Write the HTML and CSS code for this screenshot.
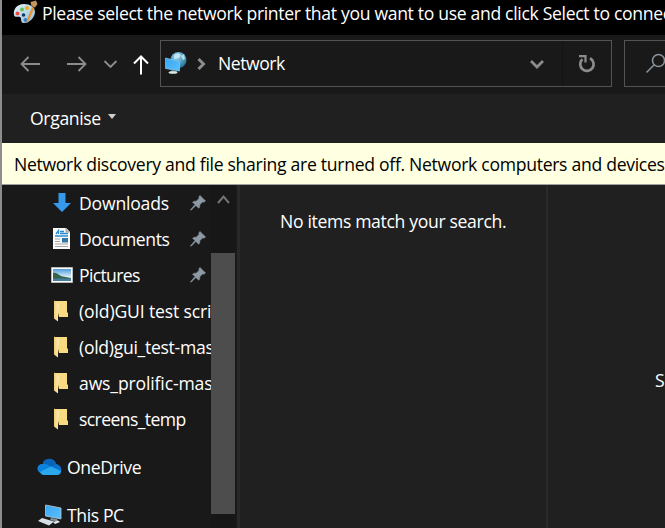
FILE: index.html
```html
<!DOCTYPE html>
<html lang="en-GB">
<head>
<meta charset="utf-8">
<title>Select network printer</title>
<link rel="stylesheet" href="styles.css">
</head>
<body>
<svg class="defs" width="0" height="0" aria-hidden="true">
  <defs>
    <linearGradient id="fold" x1="0" x2="1" y1="0" y2="0"><stop offset="0" stop-color="#f3cf76"/><stop offset="1" stop-color="#fdebb4"/></linearGradient>
    <linearGradient id="screen" x1="0" x2="1" y1="0" y2="1"><stop offset="0" stop-color="#3aa5f2"/><stop offset="1" stop-color="#59c1ff"/></linearGradient>
    <linearGradient id="sky" x1="0" x2="0" y1="0" y2="1"><stop offset="0" stop-color="#4f9bdc"/><stop offset=".7" stop-color="#e4f5fa"/></linearGradient>
    <radialGradient id="globe" cx=".4" cy=".3" r=".7"><stop offset="0" stop-color="#9bd4ea"/><stop offset="1" stop-color="#25779f"/></radialGradient>
    <linearGradient id="wood" x1="0" x2="1" y1="0" y2="1"><stop offset="0" stop-color="#e8f4fb"/><stop offset="1" stop-color="#86bbdc"/></linearGradient>
    <symbol id="pin" viewBox="0 0 16 16"><path d="M10 0.500L15.500 6L14 7.200L12.800 6.800L9.700 9.800C10 11.200 9.700 12.200 8.800 13.200L5.800 10.400L1.400 15L0.600 15.200L0.800 14.400L5 9.600L2.600 7.200C3.600 6.200 5 6 6.200 6.300L9.200 3.200L8.800 2Z" fill="#8d99a5" stroke="#8d99a5" stroke-width=".6"/></symbol>
    <symbol id="folder" viewBox="0 0 15 22"><path d="M1 1H13V12L14 13V17H5Z" fill="#f8da80"/><path d="M0 .5L5 3V9L4 11V21.500L0 18.500Z" fill="url(#fold)"/></symbol>
  </defs>
</svg>
<main class="window">
  <header class="titlebar">
    <svg class="paint" width="26" height="25" viewBox="0 0 26 25">
      <path d="M11 4C4 4 0 9 1 15C2 18 5 16 7 17C9 18 7 22 10 23C15 24 22 18 22 12C22 7 17 4 11 4Z" fill="url(#wood)"/>
      <circle cx="9" cy="9.500" r="2" fill="#6bc04b"/><circle cx="14" cy="8" r="2" fill="#e9ad26"/><circle cx="4.500" cy="13.500" r="2" fill="#e94b43"/><circle cx="10.500" cy="15" r="1.800" fill="#123b58"/><circle cx="12.500" cy="20" r="2" fill="#397fd0"/>
      <path d="M19 7L21.500 8L15 22L13.500 23L13.800 20Z" fill="#e69431"/><path d="M17.500 2L23 .5L24.500 4L22 7.500L18.500 6Z" fill="#c3935e"/>
    </svg>
    <span class="title">Please select the network printer that you want to use and click Select to connect</span>
  </header>
  <nav class="navbar">
    <svg class="navicons" width="158" height="59" viewBox="0 0 158 59" fill="none" stroke="#8c8c8c" stroke-width="1.800">
      <path d="M38 29H20M26.500 22L19.500 29L26.500 36M65 29H83M76.500 22L83.500 29L76.500 36M102.500 26L108.500 32L114.500 26"/>
      <path d="M139 39.500V22M132 28.500L139 21.500L146 28.500" stroke="#fff" stroke-width="2"/>
    </svg>
    <div class="address">
      <svg width="22" height="23" viewBox="0 0 22 23">
        <circle cx="13.500" cy="8" r="8" fill="url(#globe)"/><path d="M9 3L13 1L16 3L14 6L9 7ZM16 4L19 2L20 7L18 8Z" fill="#d3f1fa" opacity=".75"/>
        <path d="M.5 6L14.500 9.500V19L.500 16.500Z" fill="url(#screen)" stroke="#82cbed" stroke-width=".7"/><path d="M7 18L11 19L12 20H5Z" fill="#82939e"/><ellipse cx="8" cy="20.500" rx="4.500" ry="1.300" fill="#dbe6eb"/>
      </svg>
      <svg class="crumb" width="9" height="12" viewBox="0 0 9 12"><path d="M1.500 1L6.500 6L1.500 11" fill="none" stroke="#8c8c8c" stroke-width="3"/></svg>
      <span class="place">Network</span>
      <svg class="drop" width="14" height="10" viewBox="0 0 14 10"><path d="M1 2L7 8L13 2" fill="none" stroke="#8c8c8c" stroke-width="2.800"/></svg>
      <div class="reload"><svg width="18" height="18" viewBox="0 0 18 18"><path d="M12 3.200A6.700 6.700 0 1 1 4.400 4.200" fill="none" stroke="#8c8c8c" stroke-width="2.700"/><path d="M1 1.200H7.500V7.500" fill="none" stroke="#8c8c8c" stroke-width="2.200"/></svg></div>
    </div>
    <div class="search"><svg width="22" height="22" viewBox="0 0 22 22" fill="none" stroke="#8b949b" stroke-width="1.500"><circle cx="13.500" cy="7.500" r="6"/><path d="M9.200 11.800L1.500 19.500"/></svg></div>
  </nav>
  <div class="toolbar"><span class="organise">Organise</span><i class="caret"></i></div>
  <div class="notice"><span>Network discovery and file sharing are turned off. Network computers and devices</span></div>
  <section class="content">
    <aside class="tree">
      <div class="items">
        <div class="row"><svg class="icon" width="22" height="24" viewBox="0 0 22 24"><path d="M7.500 2H14.500V12H20L11 21L2 12H7.500Z" fill="#3698ea"/></svg><span class="downloads">Downloads</span><svg class="pin" width="16" height="16"><use href="#pin"/></svg></div>
        <div class="row"><svg class="icon" width="22" height="24" viewBox="0 0 22 24"><path d="M2 1H15L19 5V22H2Z" fill="#fafafa"/><path d="M15 1V5H19" fill="#ccc" stroke="#888" stroke-width=".7"/><path d="M5 7L7.500 3.500V7M9 4.500H13M9 6.500H17M4 9H17" fill="none" stroke="#288bd0" stroke-width="1.300"/><path d="M4 12H9M4 14.500H9M4 17H17M4 19.500H17" stroke="#a5a5a5"/><path d="M11 11H17V15.500H11Z" fill="#3277a5"/></svg><span class="documents">Documents</span><svg class="pin" width="16" height="16"><use href="#pin"/></svg></div>
        <div class="row"><svg class="icon" width="22" height="24" viewBox="0 0 22 24"><path d="M.5 4.500H21.500V19.500H.5Z" fill="#fff" stroke="#b9b9b9"/><path d="M2 6H20V18H2Z" fill="url(#sky)"/><path d="M2 10C6 9 8 13 12 13.500L20 15V16H2Z" fill="#37634c"/><path d="M2 15.500H20V18H2Z" fill="#477e9e"/></svg><span class="pictures">Pictures</span><svg class="pin" width="16" height="16"><use href="#pin"/></svg></div>
        <div class="row"><svg class="folder" width="15" height="22"><use href="#folder"/></svg><span class="f1">(old)GUI test scri</span></div>
        <div class="row"><svg class="folder" width="15" height="22"><use href="#folder"/></svg><span class="f2">(old)gui_test-mas</span></div>
        <div class="row"><svg class="folder" width="15" height="22"><use href="#folder"/></svg><span class="f3">aws_prolific-mas</span></div>
        <div class="row"><svg class="folder" width="15" height="22"><use href="#folder"/></svg><span class="f4">screens_temp</span></div>
        <div class="row root"><svg width="25" height="18" viewBox="0 0 25 18"><path d="M6 6C9-1 18 0 19 6C24 7 25 11 24 14L5 15C-1 15-1 6 6 6Z" fill="#0872ce"/><path d="M6 4C9 0 16-1 19 6L13 9L6 6Z" fill="#0864b8"/><path d="M6 6C10 5 12 8 14 9L3 14.500C-1 12 0 6 6 6Z" fill="#0d82df"/><path d="M3 14L14 8.500L24 13C24 16 22 17 20 17H6Q4 17 3 14Z" fill="#29a8ed"/></svg><span class="onedrive">OneDrive</span></div>
        <div class="row root"><svg width="25" height="22" viewBox="0 0 25 22"><path d="M8.500 1L24 4V15L8.500 12Z" fill="url(#screen)" stroke="#b9c8d2" stroke-width=".8"/><path d="M14 14L20 15L21 18L13 16Z" fill="#7e909e"/><path d="M5 14L17 17.500L12 21.500L1 17Z" fill="#d7dfe5"/><path d="M16 18L21 16.500L23 18L18 20Z" fill="#e3e9ed"/></svg><span class="thispc">This PC</span></div>
      </div>
      <div class="scroll"><svg width="24" height="68" viewBox="0 0 24 68"><path d="M7 18L12.500 11.500L18 18" fill="none" stroke="#737373" stroke-width="2"/></svg><div class="thumb"></div></div>
    </aside>
    <div class="results"><span class="empty">No items match your search.</span></div>
    <div class="preview"><span>S</span></div>
  </section>
</main>
</body>
</html>
```

FILE: styles.css
```css
* { box-sizing: border-box; }
body { margin: 0; overflow: hidden; background: #202020; color: #fff; font: 17.6px/24px "Open Sans", "Noto Sans", sans-serif; }
svg { display: block; flex: none; }
span { white-space: nowrap; }
.defs { position: absolute; }
.window { width: 665px; height: 528px; display: flex; flex-direction: column; overflow: hidden; border-left: 2px solid #8d8d8d; }
.titlebar { height: 35px; flex: none; display: flex; background: #000; padding-left: 11px; }
.title { margin: 1px 0 0 3px; letter-spacing: -.33px; }
.navbar { height: 59px; flex: none; display: flex; background: #191919; }
.address { width: 452px; height: 47px; margin-top: 5px; border: 1px solid #535353; display: flex; align-items: center; padding-left: 4px; flex: none; }
.address > svg:first-child { margin-bottom: 1px; }
.crumb { margin-left: 10px; }
.place { margin: -1px 0 0 12px; letter-spacing: -.45px; }
.drop { margin-left: auto; margin-right: 18px; }
.reload { width: 49px; height: 45px; border-left: 1px solid #131313; display: flex; align-items: center; justify-content: center; }
.search { width: 60px; height: 47px; flex: none; margin: 5px 0 0 12px; border: 1px solid #535353; padding: 12px 0 0 20px; }
.toolbar { height: 49px; flex: none; display: flex; align-items: center; padding: 0 0 2px 28px; }
.organise { letter-spacing: -.35px; }
.caret { border: 4.5px solid transparent; border-top: 5px solid #d0d0d0; border-bottom: 0; margin: -2px 0 0 7px; }
.notice { height: 42px; flex: none; background: #ffffe1; border-bottom: 1px solid #a0a0a0; color: #000; padding: 9px 0 0 12px; letter-spacing: -.3px; }
.content { flex: 1; min-height: 0; display: grid; grid-template-columns: 238px 308px 1fr; }
.tree { background: #191919; display: flex; overflow: hidden; border-right: 3px solid #292929; }
.items { width: 209px; overflow: hidden; }
.row { height: 36px; display: flex; align-items: center; padding-left: 49px; letter-spacing: -.3px; }
.icon { margin-right: 6px; }
.downloads { letter-spacing: -.2px; }
.documents { letter-spacing: -.4px; }
.pictures { letter-spacing: -.65px; }
.folder { margin: 0 10px 0 3px; }
.f1 { letter-spacing: -.15px; }
.f2 { letter-spacing: -.3px; }
.f3 { letter-spacing: -.15px; }
.f4 { letter-spacing: -.6px; }
.pin { margin-left: auto; margin-right: 5px; }
.root { padding-left: 35px; height: 48px; padding-top: 12px; }
.root span { margin-left: 5px; letter-spacing: -.4px; }
.scroll { width: 24px; background: #171717; }
.thumb { height: 261px; background: #4d4d4d; }
.results { padding: 24px 0 0 40px; border-right: 2px solid #2b2b2b; }
.empty { letter-spacing: -.34px; }
.preview { overflow: hidden; padding: 183px 0 0 107px; }
```
